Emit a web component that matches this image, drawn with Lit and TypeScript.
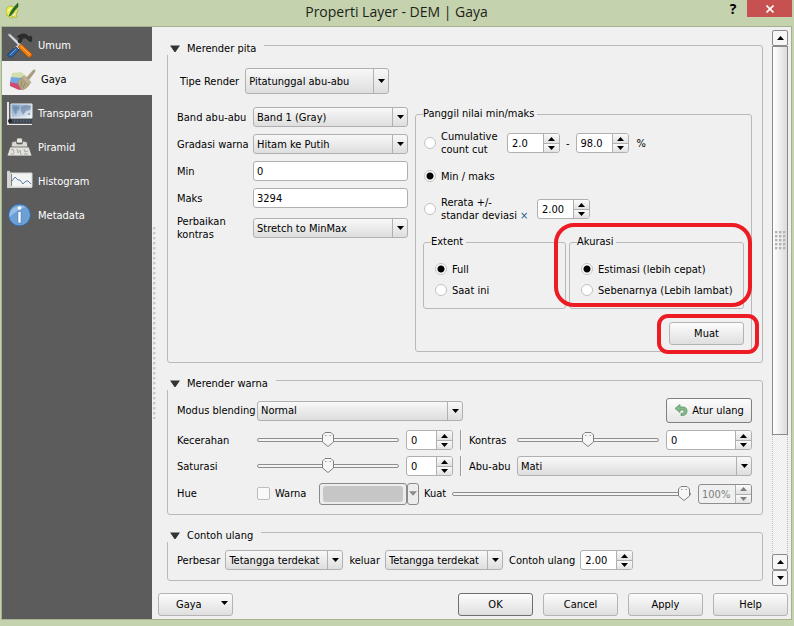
import { LitElement, html, css, svg } from "lit";
import { customElement, state } from "lit/decorators.js";

const downArrow = html`<svg class="arrow" viewBox="0 0 7 4" width="7" height="4" aria-hidden="true"><path d="M0 0h7L3.5 4z" /></svg>`;
const upArrow = html`<svg class="arrow" viewBox="0 0 7 4" width="7" height="4" aria-hidden="true"><path d="M0 4h7L3.5 0z" /></svg>`;

const combo = (id: string, options: string[], cls = "", label = "") => html`
  <span class="combo ${cls}">
    <select id=${id} aria-label=${label || id}>${options.map((o) => html`<option>${o}</option>`)}</select>
    <span class="drop">${downArrow}</span>
  </span>`;

const spin = (id: string, value: string, cls = "", label = "", disabled = false) => html`
  <span class="spin ${cls} ${disabled ? "off" : ""}">
    <input id=${id} type="text" inputmode="decimal" .value=${value} aria-label=${label || id} ?disabled=${disabled} />
    <span class="steps">
      <button type="button" aria-label="+" ?disabled=${disabled}>${upArrow}</button>
      <button type="button" aria-label="-" ?disabled=${disabled}>${downArrow}</button>
    </span>
  </span>`;

const icons = {
  tools: svg`
    <path d="M1 1l2 0 14 13-2 2L2 3z" fill="#d9dde0" stroke="#8d9296" stroke-width=".6"/>
    <path d="M10 4c3-3 7-4 10-2l2 2 2-1c1 2 1 4 0 6l-3-2-2-2-3 0-3 6-2-2 2-5-3 0z" fill="#2b2d2f" stroke="#151617" stroke-width=".5"/>
    <path d="M13 10l2 3-5 5-3-3z" fill="#c9cdd0"/>
    <path d="M9 14l3 3-7 7c-2 1-5-1-4-3z" fill="#2e66a8" stroke="#17385f" stroke-width=".8"/>
    <path d="M3 22l6-6" stroke="#6fa0d8" stroke-width="1"/>
    <path d="M14 11l11 10c0 2-2 4-4 3L11 14z" fill="#f07c12" stroke="#a64c00" stroke-width=".7"/>
    <path d="M14 13l9 9" stroke="#ffb15c" stroke-width="1"/>`,
  brush: svg`
    <path d="M2 6l9-1 6 4-4 4-12-2z" fill="#d3dfae"/>
    <path d="M1 10l11 1-2 7-10-3z" fill="#72a7e2"/>
    <path d="M0 15l9 2 4 5-4 1-9-4z" fill="#cf4a71"/>
    <path d="M23 3c2-1 3 0 2 2l-6 8-3-2z" fill="#a89d80"/>
    <path d="M14 9l7 6-2 3-8-7z" fill="#bdb294" stroke="#958a68" stroke-width=".5"/>
    <path d="M11 11l8 7c-2 3-4 4-7 5-2-2-4-5-4-8z" fill="#b3a683" stroke="#8f8463" stroke-width=".5"/>
    <path d="M12 14l-1 6M15 16l-2 5" stroke="#8f8463" stroke-width=".8"/>`,
  map: svg`
    <defs><linearGradient id="sky" x2="1" y2="1"><stop stop-color="#6f94c2"/><stop offset="1" stop-color="#f7f9fb"/></linearGradient></defs>
    <path d="M4 3h21v14H4z" fill="url(#sky)" stroke="#eef0f2"/>
    <path d="M6 6l5-1 2 2-3 3-1 4-2-3zM14 6l5-2 5 1-1 4-4 1-3 4-2-4zM21 12l2 0v2h-2z" fill="#56718f" opacity=".5"/>
    <path d="M0 1h2v22H0z" fill="#e4e6e8"/><path d="M2 18h23v4H2z" fill="#414b58"/>
    <path d="M4 20h21" stroke="#66758a" stroke-dasharray="1 2"/><path d="M0 23.500h25" stroke="#eceeef"/>
    <circle cx="3" cy="20" r="2" fill="#222"/>`,
  pyramid: svg`
    <path d="M10 3h5l1 5H9z" fill="#e8e8e5" stroke="#55554f" stroke-width=".7"/>
    <path d="M5 7l4-1 1 3h5l1-3 4 1 1 6H4z" fill="#d9d9d5" stroke="#62625b" stroke-width=".7"/>
    <path d="M3 12h19l3 9H0z" fill="#e2e2de" stroke="#55554f" stroke-width=".7"/>
    <path d="M4 15l2-1 1 4M10 14l1 4 2-3 1 5M17 14l1 3 3-1M4 19h3M17 19h4" stroke="#a8a8a0" fill="none"/>`,
  chart: svg`
    <path d="M3 4h22v14H3z" fill="#f2f3f3" stroke="#d4d7d7"/>
    <path d="M0 2h3v17H0z" fill="#d9dbdb" stroke="#aaa" stroke-width=".4"/><path d="M2 18.500h23" stroke="#d0d2d2"/>
    <path d="M5 12l3-4 3 3 2 0 3 4 3-3 2 0 3 3" stroke="#5d7da8" fill="none"/>
    <path d="M4.500 5v12" stroke="#555" stroke-width=".7"/>`,
  info: svg`
    <circle cx="12.500" cy="12" r="11" fill="#6c9fd6" stroke="#35659c"/>
    <path d="M2.500 14C2 5 11 1 19 4 14 5 8 9 2.500 14z" fill="#a3c5e8" opacity=".8"/>
    <circle cx="12.500" cy="5" r="1.800" fill="#fff"/>
    <path d="M11 8.500h3V20h-3z" fill="#fff" stroke="#3d6ea6" stroke-width=".5"/>`,
};

const pages = [
  { name: "Umum", icon: icons.tools },
  { name: "Gaya", icon: icons.brush },
  { name: "Transparan", icon: icons.map },
  { name: "Piramid", icon: icons.pyramid },
  { name: "Histogram", icon: icons.chart },
  { name: "Metadata", icon: icons.info },
];

@customElement("app-root")
export class AppRoot extends LitElement {
  @state() private page = "Gaya";

  static styles = css`
    :host {
      display: block;
      font: 11px/13px "DejaVu Sans Condensed", "DejaVu Sans", sans-serif;
      color: #000;
    }
    *, *::before, *::after { box-sizing: border-box; }
    input, select, button { font: inherit; color: inherit; margin: 0; }
    button { padding: 0; }
    label { white-space: nowrap; }
    .window {
      min-height: 100vh;
      background: #c4d2ae;
      display: flex;
      flex-direction: column;
      padding: 0 2px 6px 1px;
    }
    .titlebar {
      height: 26px;
      display: grid;
      grid-template-columns: 1fr auto 1fr;
      align-items: center;
      padding-bottom: 2px;
    }
    .titlebar .logo { margin: 0 0 2px 5px; }
    .titlebar h1 {
      margin: 0;
      font: 14px/20px "Open Sans", "Noto Sans", sans-serif;
      color: #1c1f18;
    }
    .tools { justify-self: end; align-self: start; display: flex; }
    .tools button { border: 0; height: 17px; }
    .help { width: 28px; background: none; font: bold 14px/16px "Open Sans", sans-serif; }
    .close { width: 45px; background: #c75050; display: grid; place-items: center; }
    .body {
      flex: 1;
      display: grid;
      grid-template-columns: 150px 6px minmax(0, 1fr);
      background: #f0f0f0;
      border: 1px solid #a5b18f;
    }
    .nav { background: #5c5c5c; }
    .nav button {
      width: 100%;
      height: 34px;
      border: 0;
      background: none;
      color: #fff;
      display: flex;
      align-items: center;
      gap: 5px;
      padding: 2px 0 0 5px;
      text-align: left;
    }
    .nav button.active { background: #f0f0f0; color: #000; padding-left: 8px; }
    .splitter {
      align-self: center;
      height: 192px;
      width: 4px;
      margin-left: 1px;
      background: radial-gradient(circle at 1px 1px, #c8c8c8 1px, transparent 2px) 0 0 / 4px 5px;
    }
    .main { display: flex; flex-direction: column; padding: 3px 3px 3px 0; }
    .scroller { flex: 1; display: flex; gap: 9px; padding-left: 9px; }
    .groups { flex: 1; min-width: 0; display: flex; flex-direction: column; gap: 17px; padding-top: 15px; }
    .group {
      border: 1px solid #b9b9b9;
      border-radius: 3px;
      padding: 0 10px 10px 9px;
    }
    .group h2 {
      font: inherit;
      margin: -5px 0 8px -10px;
      width: fit-content;
      height: 14px;
      display: flex;
      align-items: center;
      gap: 7px;
      padding: 0 8px 0 3px;
      background: #f0f0f0;
    }
    .group.first h2 { margin-bottom: 13px; }

    .combo, .combo select {
      height: 20px;
      min-width: 0;
    }
    .combo { display: grid; grid-template-columns: minmax(0, 1fr) 16px; }
    .combo select {
      grid-area: 1 / 1 / 2 / 3;
      appearance: none;
      width: 100%;
      padding: 0 18px 0 3px;
      border: 1px solid #b0b0b0;
      border-radius: 3px;
      background: linear-gradient(#f8f8f8, #dedede);
    }
    .combo .drop {
      grid-area: 1 / 2;
      display: grid;
      place-items: center;
      margin: 1px 1px 1px 0;
      border-left: 1px solid #b0b0b0;
      pointer-events: none;
      z-index: 1;
    }
    .combo.tall, .combo.tall select { height: 26px; }
    .combo.tall { width: 144px; }
    .combo.blend { width: 206px; }
    .combo.near { width: 118px; }

    .text {
      width: 100%;
      height: 20px;
      border: 1px solid #b0b0b0;
      border-radius: 3px;
      background: #fff;
      padding: 1px 3px 0;
    }
    .spin {
      display: flex;
      width: 53px;
      height: 20px;
      border: 1px solid #b0b0b0;
      border-radius: 3px;
      background: #fff;
      overflow: hidden;
    }
    .spin.short { width: 47px; }
    .spin.wide { width: auto; }
    .spin.percent { width: 54px; }
    .spin input { flex: 1; min-width: 0; border: 0; padding: 1px 0 0 4px; background: none; outline: 0; }
    .spin.percent input { padding-left: 3px; }
    .steps { width: 16px; flex: none; display: grid; grid-template-rows: 1fr 1fr; border-left: 1px solid #b0b0b0; }
    .steps button {
      border: 0;
      background: linear-gradient(#fafafa, #e2e2e2);
      display: grid;
      place-items: center;
    }
    .steps button + button { border-top: 1px solid #b0b0b0; }
    .spin.off { background: #f0f0f0; border-color: #8e8e8e; color: #7d7d7d; }
    .spin.off .arrow { fill: #7d7d7d; }
    .arrow { display: block; }

    .push {
      width: 75px;
      height: 23px;
      border: 1px solid #b4b4b4;
      border-radius: 3px;
      background: linear-gradient(#fcfcfc, #dfdfdf);
    }
    .push.default { border-color: #6e6e6e; }

    .type { display: flex; align-items: center; gap: 6px; margin: 0 0 13px 3px; }
    .bands {
      display: grid;
      grid-template-columns: minmax(0, 231fr) minmax(0, 337fr);
      gap: 7px;
      align-items: start;
    }
    .form {
      display: grid;
      grid-template-columns: 76px minmax(0, 1fr);
      row-gap: 7px;
      align-items: center;
    }
    fieldset {
      margin: 0;
      min-width: 0;
      border: 1px solid #b9b9b9;
      border-radius: 3px;
      padding: 9px 7px 6px;
    }
    legend { padding: 0 3px 0 0; height: 14px; line-height: 14px; }
    .choices { display: flex; flex-direction: column; gap: 13px; }
    .choice { display: flex; align-items: center; min-height: 14px; }
    .choice label { padding-left: 5px; }
    .choices > .choice { margin-left: 1px; }
    .choice.tworow { min-height: 26px; }
    .choice .cutlabel { width: 71px; }
    .choice .devlabel { width: 101px; }
    .dash { padding: 0 6px; }
    .unit { padding-left: 8px; }
    .times { color: #1d5f8f; }
    input[type="radio"] {
      appearance: none;
      flex: none;
      width: 12px;
      height: 12px;
      border: 1px solid #c2c2c2;
      border-radius: 50%;
      background: #fff;
    }
    input[type="radio"]:checked { background: radial-gradient(circle, #000 3px, #fff 4px); }
    .extents { display: grid; grid-template-columns: minmax(0, 143fr) minmax(0, 175fr); gap: 3px; }
    .small { padding: 13px 0 11px 11px; }
    .small legend { margin-left: -4px; }
    .small .stack { display: flex; flex-direction: column; gap: 7px; }
    .marked { position: relative; }
    .load { align-self: end; height: 23px; }
    .ring {
      position: absolute;
      inset: -12px -8px 2px -15px;
      border: 4px solid #ed1c24;
      border-radius: 20px;
      pointer-events: none;
      z-index: 2;
    }
    .load .ring { inset: -8px -15px -9px -12px; border-radius: 11px; }

    .row { display: flex; align-items: center; }
    .blendrow { height: 25px; justify-content: space-between; margin-bottom: 7px; }
    .blendrow label, .name { width: 80px; flex: none; }
    .reset {
      width: 86px;
      height: 25px;
      border: 1px solid #808080;
      border-radius: 3px;
      background: linear-gradient(#fcfcfc, #e6e6e6);
      display: flex;
      align-items: center;
      justify-content: center;
      gap: 4px;
    }
    .pairs {
      display: grid;
      grid-template-columns: 73px minmax(0, 142fr) 47px 2px 41px minmax(0, 142fr) 86px;
      column-gap: 7px;
      row-gap: 6px;
      align-items: center;
    }
    .pairs .gray { grid-column: span 2; }
    .rule { height: 20px; border-left: 1px solid #999; border-right: 1px solid #fafafa; }
    .huerow { height: 21px; margin-top: 7px; }
    input[type="range"] {
      appearance: none;
      width: 100%;
      min-width: 0;
      height: 16px;
      margin: 0;
      background: none;
    }
    input[type="range"]::-webkit-slider-runnable-track {
      height: 4px;
      border: 1px solid #8d8d8d;
      border-radius: 2px;
      background: #f4f4f4;
    }
    input[type="range"]::-webkit-slider-thumb {
      appearance: none;
      width: 12px;
      height: 15px;
      margin-top: -7px;
      background: url("data:image/svg+xml,%3Csvg xmlns='http://www.w3.org/2000/svg' width='12' height='15'%3E%3Cpath d='M.5 3L3 .5h6L11.500 3v7L6 14.500.5 10z' fill='%23f6f6f6' stroke='%23808080'/%3E%3Cpath d='M3 3.500h1.500M7.500 3.500H9' stroke='%23a0a0a0'/%3E%3C/svg%3E") no-repeat;
    }
    input[type="checkbox"] {
      appearance: none;
      width: 13px;
      height: 13px;
      border: 1px solid #bdbdbd;
      border-radius: 2px;
      background: #f9f9f9;
    }
    .huerow .tint { padding-left: 5px; width: 49px; flex: none; }
    .swatch {
      width: 88px;
      height: 22px;
      flex: none;
      border: 1px solid #8a8a8a;
      border-radius: 3px;
      background: #ececec;
      padding: 2px 3px;
    }
    .swatch span { display: block; height: 16px; border-radius: 3px; background: #c6c6c6; }
    .swatchmenu {
      width: 12px;
      height: 22px;
      flex: none;
      border: 1px solid #8a8a8a;
      border-radius: 3px;
      background: #ececec;
      display: grid;
      place-items: center;
    }
    .swatchmenu .arrow { fill: #8a8a8a; width: 8px; height: 5px; }
    .huerow .strength { padding: 0 6px 0 5px; }
    .huerow input[type="range"] { flex: 1; margin-right: 7px; }
    .sample label { padding-right: 5px; }
    .sample .combo { margin-right: 6px; }

    .scrollbar { width: 16px; display: flex; flex-direction: column; }
    .scrollbar button {
      height: 16px;
      flex: none;
      border: 1px solid #8a8a8a;
      border-radius: 2px;
      background: #f6f6f6;
      display: grid;
      place-items: center;
    }
    .thumb {
      flex: 391;
      border: 1px solid #8a8a8a;
      background: linear-gradient(90deg, #fff, #dcdcdc);
      display: grid;
      place-items: center;
    }
    .grip {
      width: 11px;
      height: 19px;
      background: radial-gradient(circle at 1px 1px, #b4b4b4 1px, transparent 2px) 0 0 / 4px 4px;
    }
    .track {
      flex: 120;
      border: 1px dotted #bdbdbd;
      border-width: 0 1px;
      background: repeating-conic-gradient(#e9e9e9 0 25%, #fafafa 0 50%) 0 0 / 2px 2px;
    }
    .footer { display: flex; gap: 10px; margin-top: 7px; }
    .stylemenu { margin-right: auto; display: flex; align-items: center; justify-content: space-between; padding: 0 4px 0 17px; }
    .stylemenu .arrow { margin-bottom: 3px; }
  `;

  private radio(group: string, id: string, text: string, checked = false) {
    return html`<div class="choice">
      <input type="radio" name=${group} id=${id} ?checked=${checked} /><label for=${id}>${text}</label>
    </div>`;
  }

  private heading(text: string) {
    return html`<h2>
      <svg width="10" height="7" viewBox="0 0 10 7" aria-hidden="true"><path d="M0 .5h10L5.500 7h-1z" fill="#333" /></svg>${text}
    </h2>`;
  }

  private slider(id: string, label: string, value: number) {
    return html`<input type="range" id=${id} aria-label=${label} min="0" max="100" .value=${String(value)} />`;
  }

  render() {
    return html`
      <div class="window">
        <header class="titlebar">
          <svg class="logo" width="14" height="16" viewBox="0 0 14 16" aria-hidden="true">
            <path d="M0 8c0-3 2-5 5-5l3 1-3 4-1 3 2 2 1 2c-4 0-7-3-7-7z" fill="#e9f04e" stroke="#a3ad32" stroke-width=".7" />
            <path d="M10 5c2 2 2 4 0 6l1 3-2 1-2-3 1-3z" fill="#e3ea55" stroke="#a3ad32" stroke-width=".7" />
            <path d="M3 13C5 8 8 4 12 0v4C9 6 8 9 4 13z" fill="#1f6d1c" stroke="#1c5118" stroke-width=".5" />
            <path d="M2 8l3-3M7 13l2-3" stroke="#fff" />
          </svg>
          <h1>Properti Layer - DEM | Gaya</h1>
          <div class="tools">
            <button class="help" type="button">?</button>
            <button class="close" type="button" aria-label="Close">
              <svg width="8" height="8" viewBox="0 0 8 8"><path d="M.5.5l7 7M7.500.5l-7 7" stroke="#fff" stroke-width="1.600" /></svg>
            </button>
          </div>
        </header>
        <div class="body">
          <nav class="nav">
            ${pages.map(
              (p) => html`<button type="button" class=${p.name === this.page ? "active" : ""} @click=${() => (this.page = p.name)}>
                <svg width="26" height="25" viewBox="0 0 26 25" aria-hidden="true">${p.icon}</svg>${p.name}
              </button>`
            )}
          </nav>
          <div class="splitter"></div>
          <main class="main">
            <div class="scroller">
              <div class="groups">
                <section class="group first">
                  ${this.heading("Merender pita")}
                  <div class="type">
                    <label for="render">Tipe Render</label>
                    ${combo("render", ["Pitatunggal abu-abu"], "tall", "Tipe Render")}
                  </div>
                  <div class="bands">
                    <div class="form">
                      <label for="band">Band abu-abu</label>${combo("band", ["Band 1 (Gray)"], "", "Band abu-abu")}
                      <label for="gradient">Gradasi warna</label>${combo("gradient", ["Hitam ke Putih"], "", "Gradasi warna")}
                      <label for="min">Min</label><input class="text" id="min" type="text" value="0" />
                      <label for="max">Maks</label><input class="text" id="max" type="text" value="3294" />
                      <label for="contrast">Perbaikan<br />kontras</label>${combo("contrast", ["Stretch to MinMax"], "", "Perbaikan kontras")}
                    </div>
                    <fieldset>
                      <legend>Panggil nilai min/maks</legend>
                      <div class="choices">
                        <div class="choice tworow">
                          <input type="radio" name="range" id="cut" />
                          <label class="cutlabel" for="cut">Cumulative<br />count cut</label>
                          ${spin("low", "2.0", "cut", "Min %")}<span class="dash">-</span>${spin("high", "98.0", "cut", "Maks %")}
                          <span class="unit">%</span>
                        </div>
                        ${this.radio("range", "minmax", "Min / maks", true)}
                        <div class="choice tworow">
                          <input type="radio" name="range" id="dev" />
                          <label class="devlabel" for="dev">Rerata +/-<br />standar deviasi <span class="times">×</span></label>
                          ${spin("devs", "2.00", "", "standar deviasi")}
                        </div>
                        <div class="extents">
                          <fieldset class="small">
                            <legend>Extent</legend>
                            <div class="stack">
                              ${this.radio("extent", "full", "Full", true)} ${this.radio("extent", "current", "Saat ini")}
                            </div>
                          </fieldset>
                          <div class="marked">
                            <fieldset class="small">
                              <legend>Akurasi</legend>
                              <div class="stack">
                                ${this.radio("accuracy", "estimate", "Estimasi (lebih cepat)", true)}
                                ${this.radio("accuracy", "actual", "Sebenarnya (Lebih lambat)")}
                              </div>
                            </fieldset>
                            <div class="ring"></div>
                          </div>
                        </div>
                        <div class="marked load">
                          <button class="push" type="button">Muat</button>
                          <div class="ring"></div>
                        </div>
                      </div>
                    </fieldset>
                  </div>
                </section>

                <section class="group">
                  ${this.heading("Merender warna")}
                  <div class="row blendrow">
                    <div class="row">
                      <label for="blend">Modus blending</label>${combo("blend", ["Normal"], "blend", "Modus blending")}
                    </div>
                    <button class="reset" type="button">
                      <svg width="14" height="13" viewBox="0 0 14 13" aria-hidden="true">
                        <path d="M1 4.500L6 .5v2.500h3c3 0 4 2 4 4 0 3-2 4.500-5 4.500H7l0-2c2 0 3-1 3-2s-1-1.500-2-1.500H6v2.500z" fill="#84b98a" stroke="#5d9765" stroke-width=".8" />
                      </svg>
                      Atur ulang
                    </button>
                  </div>
                  <div class="pairs">
                    <label for="bright">Kecerahan</label>
                    ${this.slider("bright", "Kecerahan", 50)} ${spin("brightv", "0", "short", "Kecerahan")}
                    <span class="rule"></span>
                    <label for="contr">Kontras</label>
                    ${this.slider("contr", "Kontras", 50)} ${spin("contrv", "0", "wide", "Kontras")}
                    <label for="sat">Saturasi</label>
                    ${this.slider("sat", "Saturasi", 50)} ${spin("satv", "0", "short", "Saturasi")}
                    <span class="rule"></span>
                    <label for="gray">Abu-abu</label>
                    ${combo("gray", ["Mati"], "gray", "Abu-abu")}
                  </div>
                  <div class="row huerow">
                    <span class="name">Hue</span>
                    <input type="checkbox" id="tint" /><label class="tint" for="tint">Warna</label>
                    <button class="swatch" type="button" aria-label="Warna"><span></span></button>
                    <button class="swatchmenu" type="button" aria-label="Warna">${downArrow}</button>
                    <label class="strength" for="strength">Kuat</label>
                    ${this.slider("strength", "Kuat", 100)} ${spin("strengthv", "100%", "percent", "Kuat", true)}
                  </div>
                </section>

                <section class="group">
                  ${this.heading("Contoh ulang")}
                  <div class="row sample">
                    <label for="zoomin">Perbesar</label>${combo("zoomin", ["Tetangga terdekat"], "near", "Perbesar")}
                    <label for="zoomout">keluar</label>${combo("zoomout", ["Tetangga terdekat"], "near", "keluar")}
                    <label for="over">Contoh ulang</label>${spin("over", "2.00", "", "Contoh ulang")}
                  </div>
                </section>
              </div>
              <div class="scrollbar">
                <button type="button" aria-label="Up">${upArrow}</button>
                <div class="thumb"><div class="grip"></div></div>
                <div class="track"></div>
                <button type="button" aria-label="Up">${upArrow}</button>
                <button type="button" aria-label="Down">${downArrow}</button>
              </div>
            </div>
            <footer class="footer">
              <button class="push stylemenu" type="button">Gaya ${downArrow}</button>
              <button class="push default" type="button">OK</button>
              <button class="push" type="button">Cancel</button>
              <button class="push" type="button">Apply</button>
              <button class="push" type="button">Help</button>
            </footer>
          </main>
        </div>
      </div>
    `;
  }
}
